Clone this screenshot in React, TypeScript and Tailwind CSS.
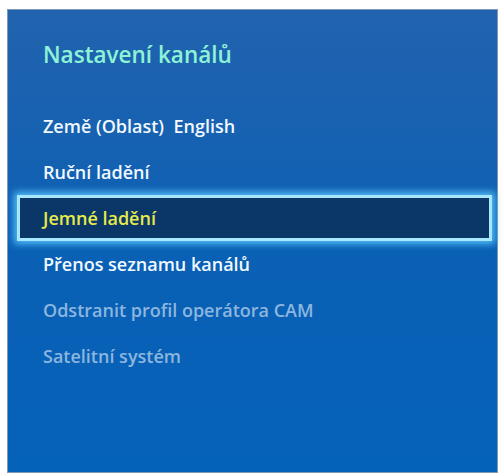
import React from "react";

type Item = { label: string; state: "normal" | "selected" | "disabled" };

const items: Item[] = [
  { label: "Země (Oblast)\u00a0\u00a0English", state: "normal" },
  { label: "Ruční ladění", state: "normal" },
  { label: "Jemné ladění", state: "selected" },
  { label: "Přenos seznamu kanálů", state: "normal" },
  { label: "Odstranit profil operátora CAM", state: "disabled" },
  { label: "Satelitní systém", state: "disabled" },
];

export default function App() {
  return (
    <div className="w-[504px] h-[476px] bg-white pl-[7px] pt-[9px] font-['Open_Sans',sans-serif]">
      <div className="w-[491px] h-[464px] border border-[#7f98b6] bg-gradient-to-b from-[#2163ae] via-[#0a60b4] to-[#0562b9] pt-[25px]">
        {/* Title */}
        <h1 className="h-[40px] leading-[40px] pl-[35px] text-[22.5px] font-semibold text-[#8ef2d6]">
          Nastavení kanálů
        </h1>

        {/* Menu */}
        <ul className="mt-[28px] ml-[9px] mr-[5px]">
          {items.map((item) => (
            <li
              key={item.label}
              className={
                item.state === "selected"
                  ? "h-[46px] flex items-center pl-[23px] border-[3px] border-[#a8e8ff] bg-[#0a3768] shadow-[0_0_7px_3px_rgba(90,200,255,0.9)] text-[#e6ea4c]"
                  : item.state === "disabled"
                  ? "h-[46px] flex items-center pl-[23px] border-[3px] border-transparent text-[#8cb6df]"
                  : "h-[46px] flex items-center pl-[23px] border-[3px] border-transparent text-[#f2f9ff]"
              }
            >
              <span className="text-[18px] font-semibold whitespace-pre">{item.label}</span>
            </li>
          ))}
        </ul>
      </div>
    </div>
  );
}
